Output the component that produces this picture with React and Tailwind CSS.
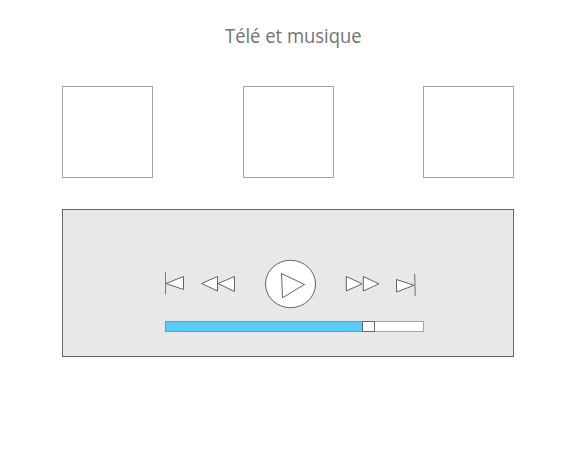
const STROKE = '#5c5c5c';

function Icon({ x, width, className = '', children }) {
  return (
    <svg
      className={`shrink-0 ${className}`}
      width={width}
      height={50}
      viewBox={`${x} 259 ${width} 50`}
      fill="#ffffff"
      stroke={STROKE}
      strokeWidth={0.95}
    >
      {children}
    </svg>
  );
}

function Controls() {
  return (
    <div className="flex h-[50px] w-[253px]">
      <Icon x={164} width={21}>
        <path d="M183.5 276.5V289.5L166 283.5Z" />
        <path d="M165.5 272V294.5" stroke="#777777" />
      </Icon>
      <Icon x={200} width={36} className="ml-[15px]">
        <path d="M217.5 276.5V291L201.5 283.5Z" />
        <path d="M234.5 276.5V291.5L218 283.5Z" />
      </Icon>
      <Icon x={265} width={52} className="ml-[29px]">
        <ellipse cx={290.5} cy={284} rx={25} ry={23.7} />
        <path d="M281.5 273.5L304.5 284.5L282.5 297.8Z" />
      </Icon>
      <Icon x={345} width={35} className="ml-[28px]">
        <path d="M346.3 276.5V291L362 283.8Z" />
        <path d="M363.3 276.5V291L379 283.8Z" />
      </Icon>
      <Icon x={395} width={22} className="ml-[15px]">
        <path d="M396.5 279.5V292L414 285.3Z" />
        <path d="M414.7 274L415.2 296" stroke="#666666" />
      </Icon>
    </div>
  );
}

function ProgressBar() {
  return (
    <div className="ml-px mt-3 flex h-[11px] w-[259px]">
      <div className="w-[197px] border border-r-0 border-[#7398a8] bg-[#5accf8]" />
      <div className="w-[13px] border border-[#666666] bg-white" />
      <div className="flex-1 border border-l-0 border-[#a5a5a5] bg-white" />
    </div>
  );
}

function Tile() {
  return <div className="h-[92px] w-[91px] border border-[#a3a3a3] bg-white" />;
}

export default function App() {
  return (
    <div className="h-[466px] w-[586px] overflow-hidden bg-white px-[62px]">
      <h1 className="ml-[163px] w-max origin-left scale-x-[0.92] pt-[22px] font-['Open_Sans','Noto_Sans',sans-serif] text-[20px] leading-7 whitespace-nowrap text-[#737373]">
        Télé et musique
      </h1>
      <div className="mt-9 flex w-[452px] justify-between">
        <Tile />
        <Tile />
        <Tile />
      </div>
      <div className="mt-[31px] h-[148px] w-[452px] border border-[#666666] bg-[#e8e8e8] pt-[49px] pl-[101px]">
        <Controls />
        <ProgressBar />
      </div>
    </div>
  );
}
